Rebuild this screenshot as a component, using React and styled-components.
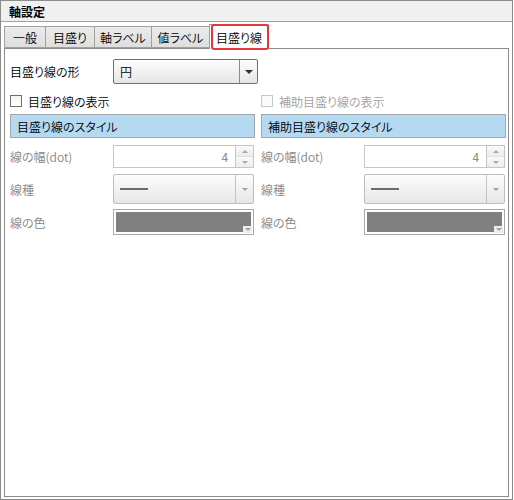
import React from "react";
import styled, { createGlobalStyle } from "styled-components";

const GlobalStyle = createGlobalStyle`
  body {
    margin: 0;
    background: #ffffff;
    font-family: "Noto Sans CJK JP", "Noto Sans", sans-serif;
    font-size: 12px;
    font-weight: 350;
    font-feature-settings: "palt";
    color: #000;
  }
`;

const tabs = [
  { label: "一般", width: 42 },
  { label: "目盛り", width: 50 },
  { label: "軸ラベル", width: 58 },
  { label: "値ラベル", width: 59 },
  { label: "目盛り線", width: 60, active: true },
];

function Checkbox({ label, disabled }) {
  return (
    <CheckRow $disabled={disabled}>
      <CheckBox $disabled={disabled} />
      <span>{label}</span>
    </CheckRow>
  );
}

function Spin({ value }) {
  return (
    <SpinBox>
      <SpinValue>{value}</SpinValue>
      <SpinButtons>
        <SpinButton>
          <Triangle $up $size={3} $color="#a8a8a8" />
        </SpinButton>
        <SpinButton>
          <Triangle $size={3} $color="#a8a8a8" />
        </SpinButton>
      </SpinButtons>
    </SpinBox>
  );
}

function LineCombo() {
  return (
    <Combo $disabled>
      <ComboValue>
        <LineSample />
      </ComboValue>
      <ComboArrow $disabled>
        <Triangle $size={3} $color="#a0a0a0" />
      </ComboArrow>
    </Combo>
  );
}

function ColorPicker() {
  return (
    <ColorBox>
      <ColorFill />
      <ColorArrow>
        <Triangle $size={3} $color="#a0a0a0" />
      </ColorArrow>
    </ColorBox>
  );
}

function StyleColumn({ check, title, disabledCheck }) {
  return (
    <Column>
      <Checkbox label={check} disabled={disabledCheck} />
      <StyleBar>{title}</StyleBar>
      <FieldRow $height={23}>
        <FieldLabel>線の幅(dot)</FieldLabel>
        <Spin value="4" />
      </FieldRow>
      <FieldRow $height={30} $gap={6}>
        <FieldLabel>線種</FieldLabel>
        <LineCombo />
      </FieldRow>
      <FieldRow $height={26} $gap={5}>
        <FieldLabel>線の色</FieldLabel>
        <ColorPicker />
      </FieldRow>
    </Column>
  );
}

export default function App() {
  return (
    <>
      <GlobalStyle />
      <Frame>
        <Header>軸設定</Header>
        <Body>
          <TabStrip>
            {tabs.map((t) => (
              <Tab key={t.label} $width={t.width} $active={t.active}>
                {t.label}
              </Tab>
            ))}
          </TabStrip>
          <Panel>
            <ShapeRow>
              <span>目盛り線の形</span>
              <Combo $height={25}>
                <ComboValue>円</ComboValue>
                <ComboArrow>
                  <Triangle $size={4} $color="#303030" />
                </ComboArrow>
              </Combo>
            </ShapeRow>
            <Columns>
              <StyleColumn check="目盛り線の表示" title="目盛り線のスタイル" />
              <StyleColumn
                check="補助目盛り線の表示"
                title="補助目盛り線のスタイル"
                disabledCheck
              />
            </Columns>
          </Panel>
        </Body>
      </Frame>
    </>
  );
}

const Frame = styled.div`
  width: 513px;
  height: 500px;
  box-sizing: border-box;
  border: 1px solid #8c8c8c;
  display: flex;
  flex-direction: column;
  background: #fff;
`;

const Header = styled.div`
  height: 20px;
  flex-shrink: 0;
  display: flex;
  align-items: center;
  padding-left: 8px;
  background: #f0f0f0;
  border-bottom: 1px solid #a0a0a0;
  font-weight: 700;
  font-size: 12px;
`;

const Body = styled.div`
  flex: 1;
  display: flex;
  flex-direction: column;
  padding: 0 2px 2px 2px;
  min-height: 0;
`;

const TabStrip = styled.div`
  height: 26px;
  flex-shrink: 0;
  display: flex;
  align-items: flex-end;
`;

const Tab = styled.div`
  position: relative;
  box-sizing: border-box;
  width: ${(p) => p.$width}px;
  height: ${(p) => (p.$active ? 25 : 22)}px;
  margin-left: -1px;
  margin-bottom: ${(p) => (p.$active ? -1 : 0)}px;
  z-index: ${(p) => (p.$active ? 1 : 0)};
  display: flex;
  align-items: center;
  justify-content: center;
  padding-top: ${(p) => (p.$active ? 1 : 0)}px;
  border: 1px solid #a0a0a0;
  border-bottom: ${(p) => (p.$active ? "none" : "1px solid #a0a0a0")};
  background: ${(p) =>
    p.$active ? "#ffffff" : "linear-gradient(#ececec, #dedede)"};

  &:first-child {
    margin-left: 1px;
  }

  ${(p) =>
    p.$active &&
    `
    &::after {
      content: "";
      position: absolute;
      top: -1px;
      left: 1px;
      right: -1px;
      bottom: -1px;
      border: 2px solid #e5373a;
      border-radius: 3px;
    }
  `}
`;

const Panel = styled.div`
  flex: 1;
  border: 1px solid #8c8c8c;
  padding: 10px 0 0 5px;
  margin-left: 1px;
  margin-right: 1px;
`;

const ShapeRow = styled.div`
  display: grid;
  grid-template-columns: 103px 145px;
  align-items: center;
  height: 25px;
  margin-bottom: 11px;
`;

const Columns = styled.div`
  display: grid;
  grid-template-columns: 245px 245px;
  column-gap: 6px;
`;

const Column = styled.div`
  display: flex;
  flex-direction: column;
`;

const CheckRow = styled.label`
  display: flex;
  align-items: center;
  gap: 6px;
  height: 12px;
  color: ${(p) => (p.$disabled ? "#a0a0a0" : "#000")};
  white-space: nowrap;
`;

const CheckBox = styled.span`
  width: 12px;
  height: 12px;
  box-sizing: border-box;
  border: 1px solid ${(p) => (p.$disabled ? "#c8c8c8" : "#707070")};
  background: ${(p) =>
    p.$disabled ? "#fafafa" : "linear-gradient(#f4f4f4, #ffffff)"};
  flex-shrink: 0;
`;

const StyleBar = styled.div`
  margin-top: 7px;
  height: 24px;
  box-sizing: border-box;
  display: flex;
  align-items: center;
  padding-left: 6px;
  background: #b4d9f1;
  border: 1px solid #a0a8ae;
`;

const FieldRow = styled.div`
  margin-top: ${(p) => p.$gap ?? 7}px;
  display: grid;
  grid-template-columns: 103px 141px;
  align-items: center;
  height: ${(p) => p.$height}px;
`;

const FieldLabel = styled.span`
  color: #858585;
  white-space: nowrap;
`;

const SpinBox = styled.div`
  height: 100%;
  box-sizing: border-box;
  display: flex;
  border: 1px solid #c6c6c6;
  background: #fff;
`;

const SpinValue = styled.div`
  flex: 1;
  display: flex;
  align-items: center;
  justify-content: flex-end;
  padding-right: 7px;
  color: #7a7a7a;
`;

const SpinButtons = styled.div`
  width: 17px;
  display: flex;
  flex-direction: column;
  border-left: 1px solid #c6c6c6;
`;

const SpinButton = styled.div`
  flex: 1;
  display: flex;
  align-items: center;
  justify-content: center;
  background: linear-gradient(#fafafa, #ececec);
  & + & {
    border-top: 1px solid #e0e0e0;
  }
`;

const Triangle = styled.span`
  width: 0;
  height: 0;
  border-left: ${(p) => p.$size}px solid transparent;
  border-right: ${(p) => p.$size}px solid transparent;
  ${(p) =>
    p.$up
      ? `border-bottom: ${p.$size}px solid ${p.$color};`
      : `border-top: ${p.$size}px solid ${p.$color};`}
`;

const Combo = styled.div`
  height: ${(p) => (p.$height ? `${p.$height}px` : "100%")};
  box-sizing: border-box;
  display: flex;
  border: 1px solid ${(p) => (p.$disabled ? "#bdbdbd" : "#707070")};
  border-radius: 2px;
  background: linear-gradient(#fdfdfd, #e6e6e6);
`;

const ComboValue = styled.div`
  flex: 1;
  display: flex;
  align-items: center;
  padding-left: 6px;
`;

const ComboArrow = styled.div`
  width: 17px;
  display: flex;
  align-items: center;
  justify-content: center;
  border-left: 1px solid ${(p) => (p.$disabled ? "#c4c4c4" : "#8c8c8c")};
`;

const LineSample = styled.span`
  width: 28px;
  height: 2px;
  background: #6c6c6c;
`;

const ColorBox = styled.div`
  position: relative;
  height: 100%;
  box-sizing: border-box;
  display: flex;
  padding: 2px;
  border: 1px solid #aaaaaa;
  background: #fff;
`;

const ColorFill = styled.div`
  flex: 1;
  background: #808080;
`;

const ColorArrow = styled.div`
  position: absolute;
  right: 1px;
  bottom: 1px;
  width: 9px;
  height: 7px;
  display: flex;
  align-items: center;
  justify-content: center;
  background: #ededed;
`;
